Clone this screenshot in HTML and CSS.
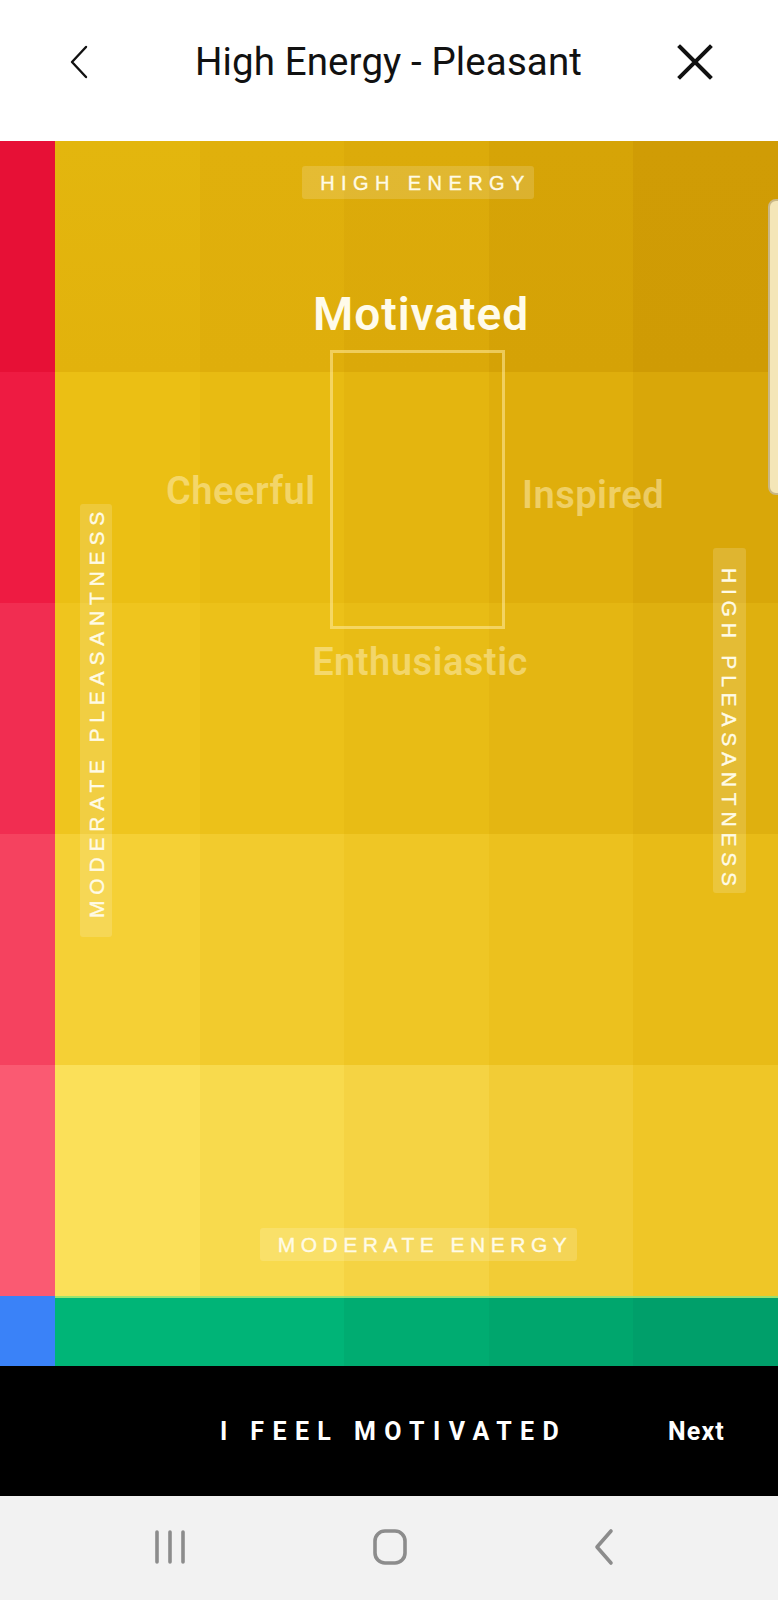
FILE: index.html
```html
<!DOCTYPE html>
<html lang="en">
<head>
<meta charset="utf-8">
<title>High Energy - Pleasant</title>
<link rel="stylesheet" href="styles.css">
</head>
<body>
<div class="app">
  <header class="topbar">
    <button class="icon-btn back" aria-label="Back">
      <svg width="24" height="36" viewBox="0 0 24 36"><path d="M19 3 L5 18 L19 33" fill="none" stroke="#111" stroke-width="2.4" stroke-linecap="round" stroke-linejoin="round"/></svg>
    </button>
    <h1 class="title">High Energy - Pleasant</h1>
    <button class="icon-btn close" aria-label="Close">
      <svg width="38" height="38" viewBox="0 0 38 38"><path d="M4 4 L34 34 M34 4 L4 34" fill="none" stroke="#111" stroke-width="4" stroke-linecap="square"/></svg>
    </button>
  </header>

  <main class="board">
    <div class="grid">
      <div class="cell s1"></div><div class="cell c11"></div><div class="cell c12"></div><div class="cell c13"></div><div class="cell c14"></div><div class="cell c15"></div>
      <div class="cell s2"></div><div class="cell c21"></div><div class="cell c22"></div><div class="cell c23"></div><div class="cell c24"></div><div class="cell c25"></div>
      <div class="cell s3"></div><div class="cell c31"></div><div class="cell c32"></div><div class="cell c33"></div><div class="cell c34"></div><div class="cell c35"></div>
      <div class="cell s4"></div><div class="cell c41"></div><div class="cell c42"></div><div class="cell c43"></div><div class="cell c44"></div><div class="cell c45"></div>
      <div class="cell s5"></div><div class="cell c51"></div><div class="cell c52"></div><div class="cell c53"></div><div class="cell c54"></div><div class="cell c55"></div>
      <div class="cell sb"></div><div class="cell g1"></div><div class="cell g2"></div><div class="cell g3"></div><div class="cell g4"></div><div class="cell g5"></div>
    </div>

    <div class="pill pill-top">HIGH ENERGY</div>
    <div class="pill pill-bottom">MODERATE ENERGY</div>
    <div class="pill pill-left"><span class="vtext up">MODERATE PLEASANTNESS</span></div>
    <div class="pill pill-right"><span class="vtext down">HIGH PLEASANTNESS</span></div>

    <div class="word word-main">Motivated</div>
    <div class="selector"></div>
    <div class="word word-left">Cheerful</div>
    <div class="word word-right">Inspired</div>
    <div class="word word-below">Enthusiastic</div>

    <div class="edge-panel"></div>
  </main>

  <footer class="actionbar">
    <span class="feel">I FEEL MOTIVATED</span>
    <span class="next">Next</span>
  </footer>

  <nav class="sysnav">
    <svg class="nav-ico" width="34" height="36" viewBox="0 0 34 36"><path d="M4 3 V33 M17 3 V33 M30 3 V33" stroke="#8c8c8c" stroke-width="3.6" stroke-linecap="round"/></svg>
    <svg class="nav-ico" width="36" height="38" viewBox="0 0 36 38"><rect x="3" y="3" width="30" height="32" rx="10" fill="none" stroke="#8c8c8c" stroke-width="3.6"/></svg>
    <svg class="nav-ico" width="24" height="38" viewBox="0 0 24 38"><path d="M19 3 L5 19 L19 35" fill="none" stroke="#8c8c8c" stroke-width="3.6" stroke-linecap="round" stroke-linejoin="round"/></svg>
  </nav>
</div>
</body>
</html>
```

FILE: styles.css
```css
* { box-sizing: border-box; }
html, body { margin: 0; padding: 0; }
body {
  width: 778px;
  overflow: hidden;
  background: #fff;
  font-family: Roboto, "Open Sans", "Liberation Sans", sans-serif;
}
.app { width: 778px; display: flex; flex-direction: column; }

.topbar {
  height: 141px;
  background: #fff;
  display: flex;
  align-items: center;
  justify-content: space-between;
  padding: 0 64px 18px 67px;
}
.icon-btn {
  background: none; border: 0; padding: 0; margin: 0;
  display: flex; align-items: center; justify-content: center;
}
.title {
  margin: 0;
  font-size: 38.5px;
  font-weight: 400;
  color: #111;
  letter-spacing: 0.1px;
  padding-left: 10px;
}

.board {
  position: relative;
  height: 1225px;
  overflow: hidden;
}
.grid {
  display: grid;
  grid-template-columns: 55px repeat(5, 1fr);
  grid-template-rows: repeat(5, 231px) 70px;
  height: 100%;
}
.s1 { background: #e71036; }
.s2 { background: #ee1b42; }
.s3 { background: #f12d51; }
.s4 { background: #f5425f; }
.s5 { background: #fa5a72; }
.sb { background: #3a82f8; }

.c11 { background: linear-gradient(#e3b60e, #e2b20c); }
.c12 { background: linear-gradient(#e0b00c, #dfae0b); }
.c13 { background: linear-gradient(#dcab0a, #dba909); }
.c14 { background: linear-gradient(#d6a407, #d5a206); }
.c15 { background: linear-gradient(#d09c05, #cf9b04); }

.c21 { background: #ebbf14; }
.c22 { background: #e8bb12; }
.c23 { background: #e4b50f; }
.c24 { background: #dfae0c; }
.c25 { background: #d9a709; }

.c31 { background: #efc51e; }
.c32 { background: #ecc119; }
.c33 { background: #e8bc15; }
.c34 { background: #e4b612; }
.c35 { background: #dfb00f; }

.c41 { background: #f5d035; }
.c42 { background: #f2cb2d; }
.c43 { background: #efc625; }
.c44 { background: #ecc11e; }
.c45 { background: #e8bb17; }

.c51 { background: #fbe059; }
.c52 { background: #f8da4d; }
.c53 { background: #f5d343; }
.c54 { background: #f2cc36; }
.c55 { background: #efc627; }

.g1, .g2, .g3, .g4, .g5 { box-shadow: inset 0 2px 0 rgba(190, 240, 110, 0.8); }
.g1 { background: #00b577; }
.g2 { background: #00b477; }
.g3 { background: #00ac71; }
.g4 { background: #00a66d; }
.g5 { background: #009f6a; }

.pill {
  position: absolute;
  background: rgba(255, 255, 255, 0.16);
  border-radius: 3px;
  color: #fffbe6;
  -webkit-text-stroke: 0.35px #fffbe6;
  font-family: "Liberation Sans", Arial, sans-serif;
  display: flex;
  align-items: center;
  justify-content: center;
  line-height: 1;
}
.pill-top {
  left: 302px; top: 25px; width: 232px; height: 33px;
  font-size: 20px;
  letter-spacing: 6.4px;
  padding-left: 15px;
}
.pill-bottom {
  left: 260px; top: 1087px; width: 317px; height: 33px;
  font-size: 21px;
  letter-spacing: 5.5px;
  padding-left: 13px;
}
.pill-left { left: 80px; top: 363px; width: 32px; height: 433px; }
.pill-right { left: 713px; top: 407px; width: 33px; height: 345px; }
.vtext {
  writing-mode: vertical-rl;
  letter-spacing: 5.8px;
  font-size: 21px;
  line-height: 1;
  padding-top: 18px;
}
.vtext.up { transform: rotate(180deg); }

.word {
  position: absolute;
  font-weight: 600;
  line-height: 1;
  white-space: nowrap;
}
.word-main {
  left: 300px; width: 242px; top: 150px;
  text-align: center;
  font-size: 46px;
  letter-spacing: 1px;
  color: #fffbea;
}
.word-left, .word-right, .word-below {
  font-size: 38px;
  letter-spacing: 0.5px;
  color: rgba(255, 240, 190, 0.5);
}
.word-left { left: 166px; top: 331px; }
.word-right { left: 522px; top: 335px; }
.word-below {
  left: 280px; width: 280px; top: 502px;
  text-align: center;
}
.selector {
  position: absolute;
  left: 330px; top: 209px; width: 175px; height: 279px;
  border: 3px solid rgba(255, 235, 160, 0.55);
}
.edge-panel {
  position: absolute;
  left: 768px; top: 58px; width: 30px; height: 296px;
  background: #f4e6b8;
  border: 2px solid #c9b787;
  border-radius: 8px;
}

.actionbar {
  height: 130px;
  background: #000;
  color: #fff;
  display: flex;
  align-items: center;
  font-weight: 700;
  font-size: 25px;
}
.feel {
  margin-left: 220px;
  letter-spacing: 8.4px;
}
.next {
  margin-left: auto;
  margin-right: 53px;
  letter-spacing: 1.2px;
}

.sysnav {
  height: 104px;
  background: #f2f2f2;
  display: flex;
  align-items: center;
  justify-content: space-between;
  padding: 0 162px 2px 153px;
}
.nav-ico { display: block; }
```
